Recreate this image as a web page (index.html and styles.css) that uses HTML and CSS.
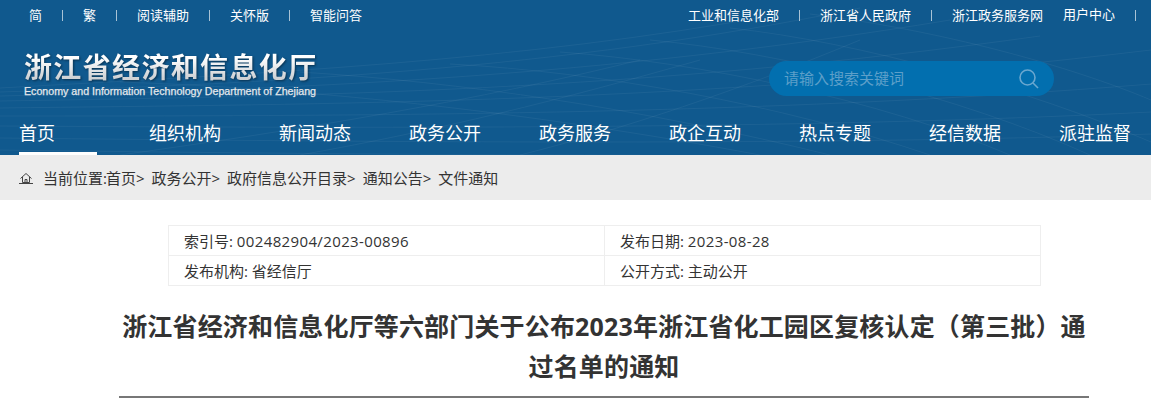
FILE: index.html
```html
<!DOCTYPE html>
<html>
	<head>
		<title>浙江省经济和信息化厅</title>
		<meta charset="utf-8">
		<link rel="stylesheet" href="styles.css">
	</head>

	<body>
		<div class="header">
			<svg class="bg-lines" width="1151" height="155" viewBox="0 0 1151 155" fill="none">
				<path d="M0 88C250 74 520 62 780 14"/>
				<path d="M0 92C260 84 560 70 860 8"/>
				<path d="M0 96C280 90 600 78 950 20"/>
				<path d="M0 101C300 96 640 92 1040 36"/>
				<path d="M0 108C320 104 700 104 1151 50"/>
				<path d="M0 116C340 116 760 116 1151 84"/>
				<path d="M0 126C360 128 800 130 1151 112"/>
				<path d="M0 138C380 142 820 146 1151 134"/>
				<path d="M0 150C300 154 500 155 640 155"/>
				<path d="M120 82C300 88 520 110 760 155"/>
				<path d="M300 72C460 82 640 108 830 155"/>
				<path d="M450 64C600 72 780 104 930 155"/>
				<path d="M560 52C700 62 880 100 1010 155"/>
				<path d="M650 40C780 52 960 96 1090 155"/>
				<path d="M730 28C860 42 1030 90 1151 142"/>
				<path d="M810 14C940 30 1070 66 1151 100"/>
				<path d="M300 155C440 130 560 100 700 60"/>
				<path d="M120 155C300 130 480 100 640 60"/>
				<path d="M520 155C620 130 740 90 860 40"/>
			</svg>

			<div class="topbar">
				<div class="top-links">
					<a href="#">简</a>
					<a href="#">繁</a>
					<a href="#">阅读辅助</a>
					<a href="#">关怀版</a>
					<a href="#" class="last">智能问答</a>
				</div>
				<div class="top-links">
					<a href="#">工业和信息化部</a>
					<a href="#">浙江省人民政府</a>
					<a href="#" class="last">浙江政务服务网</a>
					<a href="#" class="user">用户中心</a>
				</div>
			</div>

			<div class="brand-row">
				<div class="brand">
					<h1>浙江省经济和信息化厅</h1>
					<p>Economy and Information Technology Department of Zhejiang</p>
				</div>
				<form class="search">
					<input type="text" placeholder="请输入搜索关键词">
					<svg width="20" height="20" viewBox="0 0 20 20" fill="none">
						<circle cx="8.5" cy="8.5" r="7.5"/>
						<path d="M14 14l5 5"/>
					</svg>
				</form>
			</div>

			<div class="nav">
				<a href="#" class="active">首页</a>
				<a href="#">组织机构</a>
				<a href="#">新闻动态</a>
				<a href="#">政务公开</a>
				<a href="#">政务服务</a>
				<a href="#">政企互动</a>
				<a href="#">热点专题</a>
				<a href="#">经信数据</a>
				<a href="#">派驻监督</a>
			</div>
		</div>

		<div class="crumbs">
			<svg width="14" height="12" viewBox="0 0 14 12" fill="none">
				<path d="M1.5 6.5L7 1.5l5.5 5"/>
				<path d="M3.5 5v5.5h7V5"/>
				<path d="M6 10.5V7.5h2v3"/>
				<path d="M0 11.5h14"/>
			</svg>
			<span>当前位置:</span><a href="#">首页&gt;</a>
			<a href="#">政务公开&gt;</a>
			<a href="#">政府信息公开目录&gt;</a>
			<a href="#">通知公告&gt;</a>
			<a href="#">文件通知</a>
		</div>

		<div class="meta">
			<div class="cell">索引号: <span class="num">002482904/2023-00896</span></div>
			<div class="cell">发布日期: <span class="num">2023-08-28</span></div>
			<div class="cell">发布机构: 省经信厅</div>
			<div class="cell">公开方式: 主动公开</div>
		</div>

		<div class="article-title">
			<h2>浙江省经济和信息化厅等六部门关于公布2023年浙江省化工园区复核认定（第三批）通过名单的通知</h2>
		</div>
	</body>
</html>
```

FILE: styles.css
```css
html,body {
	margin: 0;
	padding: 0;
	background-color: #fff;
	overflow: hidden;
}

body {
	font-family: "Open Sans", "Noto Sans CJK SC", sans-serif;
	color: #333;
}

a {
	color: inherit;
	text-decoration: none;
}

.header {
	position: relative;
	height: 155px;
	background-color: #10598e;
	color: #fff;
	overflow: hidden;
}

.bg-lines {
	position: absolute;
	top: 0;
	left: 0;
}

.bg-lines path {
	stroke: #ffffff;
	stroke-opacity: .05;
}

.topbar, .brand-row, .nav {
	position: relative;
}

.topbar {
	display: flex;
	justify-content: space-between;
	height: 30px;
	padding: 0 15px 0 29px;
	font-size: 13px;
	line-height: 30px;
}

.top-links {
	display: flex;
}

.top-links a {
	display: flex;
	align-items: center;
}

.top-links a::after {
	content: "";
	width: 1px;
	height: 11px;
	margin: 0 20px;
	background-color: #a9c3d6;
}

.top-links a.last::after {
	display: none;
}

.top-links a.last {
	margin-right: 20px;
}

.top-links a.user {
	margin-top: -2px;
}

.top-links a.user::after {
	margin-right: 0;
	margin-top: 2px;
}

.brand-row {
	display: flex;
	justify-content: space-between;
	align-items: flex-start;
	height: 84px;
	padding: 0 97px 0 24px;
}

.brand h1 {
	margin: 19px 0 0;
	font-size: 28px;
	line-height: 36px;
	font-weight: 700;
	letter-spacing: 1.35px;
	white-space: nowrap;
	color: transparent;
	background: linear-gradient(#ffffff 25%, #cfd2d5 80%);
	-webkit-background-clip: text;
	background-clip: text;
	filter: drop-shadow(1px 1px 1px #00000070);
}

.brand p {
	margin: -1px 0 0;
	font-family: "Liberation Sans", sans-serif;
	font-size: 10.65px;
	line-height: 14px;
	white-space: nowrap;
	color: #e4e8ec;
	-webkit-text-stroke: .25px #e4e8ec;
}

.search {
	display: flex;
	align-items: center;
	justify-content: space-between;
	box-sizing: border-box;
	width: 285px;
	height: 35px;
	margin-top: 31px;
	padding: 0 15px 0 15px;
	border-radius: 18px;
	background-color: #026faf;
}

.search input {
	width: 220px;
	padding: 0 0 2px;
	border: 0;
	outline: 0;
	background: none;
	font-family: inherit;
	font-size: 15px;
	color: #fff;
}

.search input::placeholder {
	color: #5d9fc9;
	opacity: 1;
}

.search svg {
	stroke: #6aa7cf;
	stroke-width: 1.6;
}

.nav {
	display: grid;
	grid-template-columns: repeat(9, 130px);
	height: 41px;
	padding-left: 19px;
	font-size: 18px;
	line-height: 38px;
}

.nav a {
	justify-self: start;
	height: 38px;
	white-space: nowrap;
}

.nav a.active {
	width: 78px;
	border-bottom: 3px solid #fff;
}

.crumbs {
	display: flex;
	align-items: center;
	gap: 7px;
	height: 45px;
	padding-left: 19px;
	background-color: #ececec;
	font-size: 15px;
}

.crumbs svg {
	margin-right: 3px;
	stroke: #444;
}

.crumbs span + a {
	margin-left: -8px;
}

.meta {
	display: grid;
	grid-template-columns: 436px 436px;
	width: 873px;
	box-sizing: border-box;
	margin: 25px 0 0 168px;
	border-top: 1px solid #eee;
	border-left: 1px solid #eee;
	font-size: 15px;
}

.meta .cell {
	box-sizing: border-box;
	height: 30px;
	padding-left: 15px;
	border-right: 1px solid #eee;
	border-bottom: 1px solid #eee;
	line-height: 30px;
}

.meta .num {
	letter-spacing: .37px;
}

.article-title {
	width: 970px;
	margin: 20px 0 0 119px;
	padding-bottom: 10px;
	border-bottom: 2px solid #777;
}

.article-title h2 {
	margin: 0;
	padding: 0;
	font-size: 25px;
	line-height: 40px;
	font-weight: 700;
	letter-spacing: .16px;
	text-align: center;
	color: #333;
}
```
